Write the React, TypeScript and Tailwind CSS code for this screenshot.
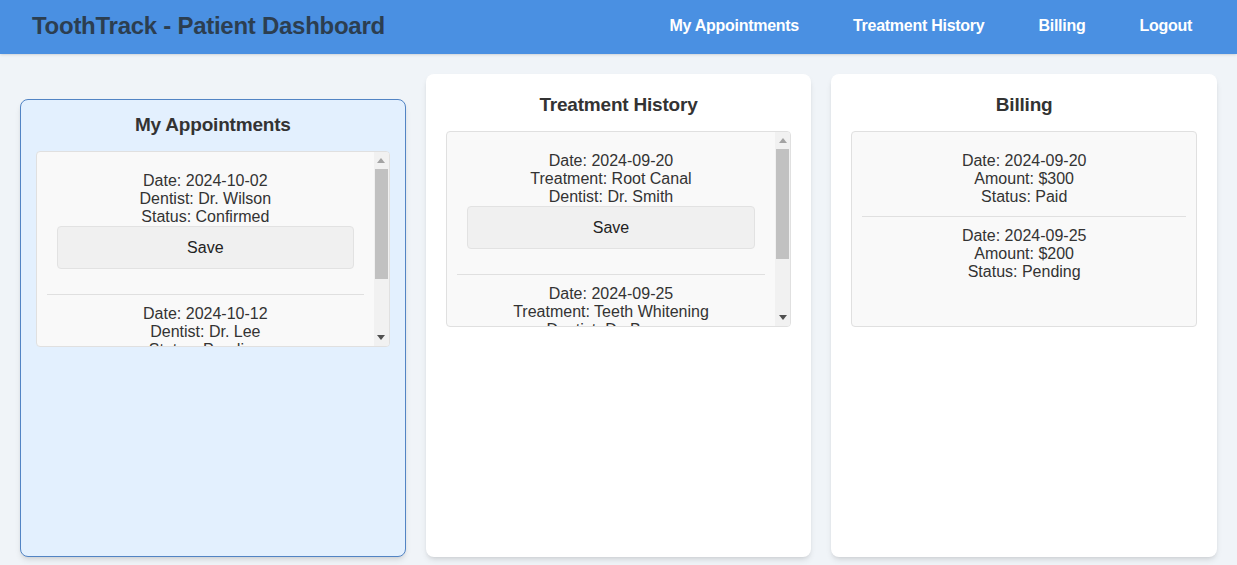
import * as React from 'react';

type Entry = { lines: string[]; save?: boolean };

const appointments: Entry[] = [
    { lines: ['Date: 2024-10-02', 'Dentist: Dr. Wilson', 'Status: Confirmed'], save: true },
    { lines: ['Date: 2024-10-12', 'Dentist: Dr. Lee', 'Status: Pending'], save: true },
];

const treatments: Entry[] = [
    { lines: ['Date: 2024-09-20', 'Treatment: Root Canal', 'Dentist: Dr. Smith'], save: true },
    { lines: ['Date: 2024-09-25', 'Treatment: Teeth Whitening', 'Dentist: Dr. Brown'], save: true },
];

const bills: Entry[] = [
    { lines: ['Date: 2024-09-20', 'Amount: $300', 'Status: Paid'] },
    { lines: ['Date: 2024-09-25', 'Amount: $200', 'Status: Pending'] },
];

// classic scrollbar look, scrolled to top
function ScrollBar() {
    return (
        <div className="w-[15px] shrink-0 flex flex-col bg-[#f1f1f1]">
            <div className="h-[17px] flex items-center justify-center">
                <svg width="8" height="5" viewBox="0 0 8 5">
                    <polygon points="4,0 8,5 0,5" fill="#a3a3a3" />
                </svg>
            </div>
            <div className="h-[110px] mx-px bg-[#c1c1c1]" />
            <div className="flex-1" />
            <div className="h-[17px] flex items-center justify-center">
                <svg width="8" height="5" viewBox="0 0 8 5">
                    <polygon points="0,0 8,0 4,5" fill="#505050" />
                </svg>
            </div>
        </div>
    );
}

function ItemList({ items, scroll }: { items: Entry[]; scroll?: boolean }) {
    return (
        <div className="h-[196px] flex overflow-hidden bg-[#f9f9f9] border border-[#e0e0e0] rounded">
            <div className="flex-1 overflow-hidden p-2.5">
                {items.map((item, i) => (
                    <div key={i} className="p-2.5 border-b border-[#e0e0e0] last:border-b-0 text-center text-base leading-[18px] text-[#333]">
                        {item.lines.map((line) => (
                            <p key={line}>{line}</p>
                        ))}
                        {item.save && (
                            <button className="w-full h-[43px] mb-[15px] bg-[#f0f0f0] border border-[#e2e2e2] rounded text-base text-[#222]">
                                Save
                            </button>
                        )}
                    </div>
                ))}
            </div>
            {scroll && <ScrollBar />}
        </div>
    );
}

export default function App() {
    return (
        <div className="min-h-screen bg-[#f0f4f8] font-['Arial','Liberation_Sans',sans-serif]">
            {/* Header */}
            <header className="h-[54px] flex items-center justify-between pl-8 pr-[33px] pb-[2px] bg-[#4a90e2] shadow-sm">
                <h1 className="text-2xl font-bold text-[#2c3e50] tracking-[-0.27px]">ToothTrack - Patient Dashboard</h1>
                <nav className="flex gap-[30px]">
                    {['My Appointments', 'Treatment History', 'Billing', 'Logout'].map((link) => (
                        <a key={link} href="#" className="px-3 text-base font-bold text-white tracking-[-0.27px]">
                            {link}
                        </a>
                    ))}
                </nav>
            </header>

            {/* Cards */}
            <main className="grid grid-cols-3 gap-5 px-5 pt-5 h-[503px]">
                <section className="mt-[25px] pt-3 px-[15px] bg-[#e3f0fe] border border-[#5284c4] rounded-lg shadow-md">
                    <h2 className="text-[19px] leading-[25px] font-bold text-center text-[#333] tracking-[-0.2px] mb-[14px]">My Appointments</h2>
                    <ItemList items={appointments} scroll />
                </section>

                <section className="pt-[18px] px-5 bg-white rounded-lg shadow-md">
                    <h2 className="text-[19px] leading-[25px] font-bold text-center text-[#333] tracking-[-0.2px] mb-[14px]">Treatment History</h2>
                    <ItemList items={treatments} scroll />
                </section>

                <section className="pt-[18px] px-5 bg-white rounded-lg shadow-md">
                    <h2 className="text-[19px] leading-[25px] font-bold text-center text-[#333] tracking-[-0.2px] mb-[14px]">Billing</h2>
                    <ItemList items={bills} />
                </section>
            </main>
        </div>
    );
}
